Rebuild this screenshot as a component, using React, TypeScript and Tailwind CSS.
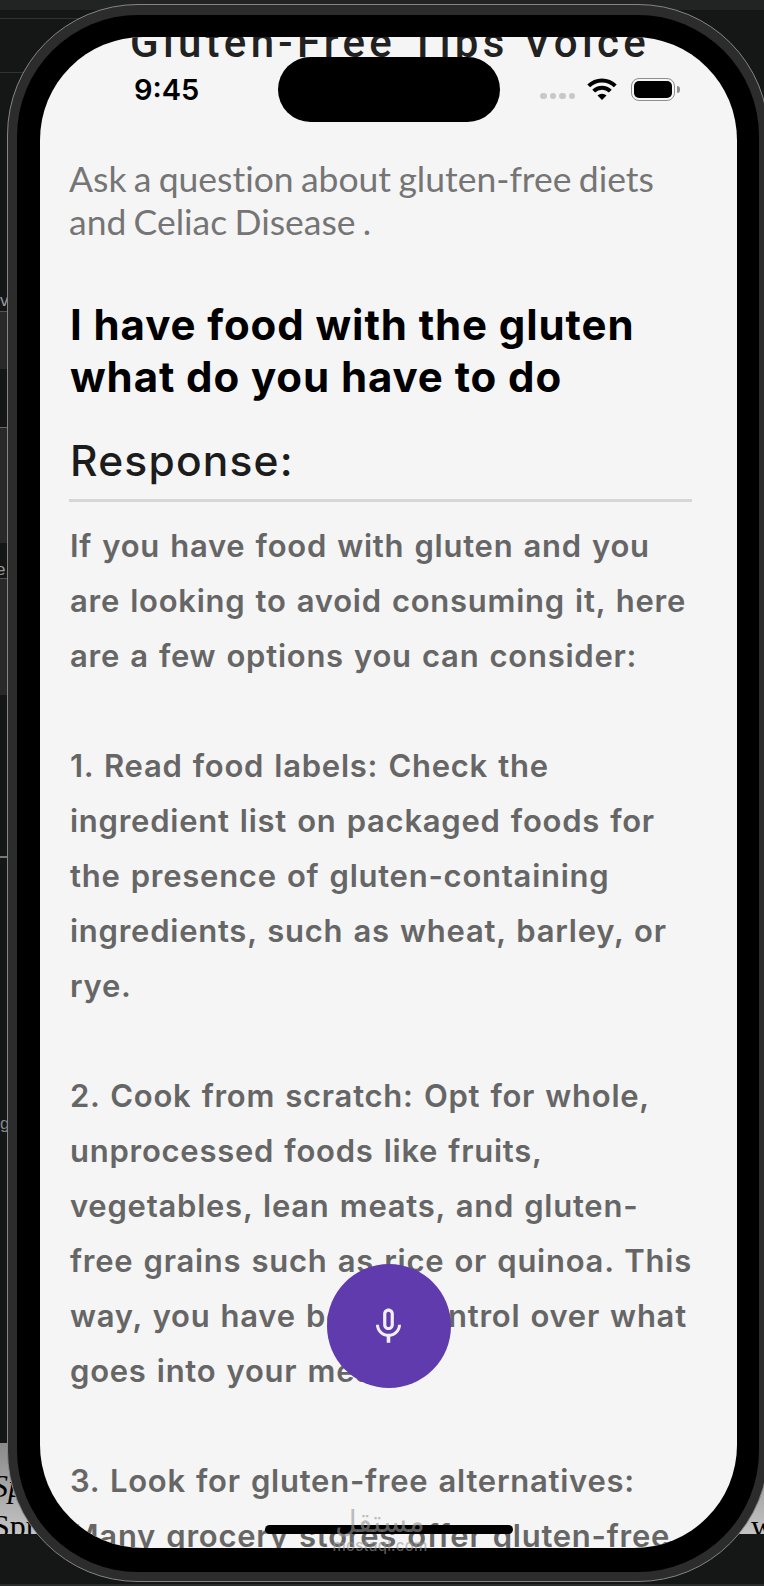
import { MdMicNone } from "react-icons/md";

// ── Content ────────────────────────────────────────────────────────────────────

const RESPONSE_LINES = [
  "If you have food with gluten and you",
  "are looking to avoid consuming it, here",
  "are a few options you can consider:",
  "",
  "1. Read food labels: Check the",
  "ingredient list on packaged foods for",
  "the presence of gluten-containing",
  "ingredients, such as wheat, barley, or",
  "rye.",
  "",
  "2. Cook from scratch: Opt for whole,",
  "unprocessed foods like fruits,",
  "vegetables, lean meats, and gluten-",
  "free grains such as rice or quinoa. This",
  "way, you have better control over what",
  "goes into your meals.",
  "",
  "3. Look for gluten-free alternatives:",
  "Many grocery stores offer gluten-free",
];

// ── Desktop behind the phone ───────────────────────────────────────────────────

/** Slices of the windows behind the phone; only the outer edges stay visible. */
function DesktopBackdrop() {
  return (
    <div className="flex h-full flex-col bg-[#141716]">
      <div className="h-2.5 shrink-0 bg-[#222423]" />
      <div className="mt-2 h-px w-20 shrink-0 bg-[#303332]" />
      <div className="mt-[53px] h-px w-6 shrink-0 bg-[#303332]" />
      <div className="flex h-[238px] shrink-0 items-end font-['Liberation_Sans',sans-serif] text-[17px] leading-5 text-[#999]">
        v
      </div>
      <div className="h-[58px] w-2 shrink-0 border-t border-[#555] bg-[#292929]" />
      <div className="mt-[58px] h-[116px] w-2 shrink-0 border-t border-[#666] bg-[#292929]" />
      <div className="flex h-[36px] w-2 shrink-0 items-end border-b border-[#555] font-['Liberation_Sans',sans-serif] text-[17px] leading-4 text-[#999]">
        <span className="-ml-1">e.</span>
      </div>
      <div className="h-[116px] w-2 shrink-0 bg-[#292929]" />
      <div className="mt-[161px] h-0.5 w-2 shrink-0 bg-[#777]" />
      <div className="mt-[256px] flex h-5 shrink-0 items-center font-['Liberation_Sans',sans-serif] text-[17px] text-[#888]">
        g
      </div>
      <div className="mt-auto h-[91px] shrink-0 overflow-hidden bg-linear-to-b from-[#8a8a8a] to-[#c4c4c4] pt-[23px] font-['Liberation_Serif',serif] text-[32px] leading-[40px] text-black">
        <p className="-ml-2 italic">Sp</p>
        <p className="-ml-2 flex justify-between">
          <span>Spring</span>
          <span className="-mr-2.5">w</span>
        </p>
      </div>
      <div className="mt-[50px] h-0.5 shrink-0 bg-[#292b2a]" />
    </div>
  );
}

// ── Status bar ─────────────────────────────────────────────────────────────────

function WifiIcon() {
  return (
    <svg className="h-[22px] w-[30px]" viewBox="0 0 30 22" fill="none" stroke="#000" strokeWidth="4">
      <path d="M1.7 7.9a18.8 18.8 0 0 1 26.6 0" />
      <path d="M6.7 13.1a11.7 11.7 0 0 1 16.6 0" />
      <path d="M15 22l-4.5-4.5a6.4 6.4 0 0 1 9 0z" fill="#000" stroke="none" />
    </svg>
  );
}

function BatteryIcon() {
  return (
    <div className="flex items-center gap-[1.5px]">
      <div className="h-[23px] w-[44px] rounded-[8px] border-[1.5px] border-[#8e8e8e] p-[2px]">
        <div className="h-full w-full rounded-[5px] bg-black" />
      </div>
      <div className="h-[7px] w-[3px] rounded-r-full bg-[#8e8e8e]" />
    </div>
  );
}

function StatusBar() {
  return (
    <div className="absolute inset-x-0 top-5 flex h-[65px] items-center pl-[94px]">
      <span className="w-36 font-['Inter',sans-serif] text-[29px] font-semibold leading-9 text-black">
        9:45
      </span>
      {/* Dynamic Island */}
      <div className="h-full w-[222px] rounded-full bg-black" />
      <div className="ml-10 flex items-center pb-px">
        <div className="flex gap-[3px] pt-[14px]">
          {[0, 1, 2, 3].map((i) => (
            <span key={i} className="size-[6.5px] rounded-full bg-[#c8c8c8]" />
          ))}
        </div>
        <div className="ml-3 mr-[14px]">
          <WifiIcon />
        </div>
        <BatteryIcon />
      </div>
    </div>
  );
}

// ── Screen ─────────────────────────────────────────────────────────────────────

function Watermark() {
  return (
    <div className="absolute inset-x-0 bottom-8 flex flex-col items-center pr-1 text-[#959595]/60">
      <p className="font-['DejaVu_Sans',sans-serif] text-[30px] leading-8">مستقل</p>
      <p className="font-['Inter',sans-serif] text-[15px] font-medium leading-4 tracking-[0.2px]">mostaql.com</p>
    </div>
  );
}

function VoiceScreen() {
  return (
    <div className="relative h-[1511px] w-[697px] overflow-hidden rounded-[103px] bg-[#f5f5f5] font-['Inter',sans-serif]">
      <h1 className="-mt-[19px] h-[47px] whitespace-nowrap pl-[90px] font-['Roboto',sans-serif] text-[42px] font-medium leading-[50px] tracking-[4.3px] text-[#212121]">
        Gluten-Free Tips Voice
      </h1>

      <main className="whitespace-nowrap px-[29px] pt-[92px]">
        <p className="font-['Lato',sans-serif] text-[35.5px] leading-[43px] text-[#757575] [font-variant-ligatures:none] [word-spacing:-1.8px]">
          Ask a question about gluten-free diets
          <br />
          and Celiac Disease .
        </p>
        <h2 className="mt-14 pl-px text-[42px] font-bold leading-[52px] tracking-[0.9px] text-black">
          I have food with the gluten
          <br />
          what do you have to do
        </h2>
        <h3 className="mt-8 pl-px text-[42.5px] font-[450] leading-[52px] tracking-[1.2px] text-[#1c1c1c]">
          Response:
        </h3>
        <div className="mt-3 h-[2.5px] w-[623px] bg-[#d6d6d6]" />
        <div className="mt-4 pl-px text-[31px] font-[580] leading-[55px] tracking-[0.75px] text-[#666] [word-spacing:1.6px]">
          {RESPONSE_LINES.map((line, i) => (
            <p key={i} className="h-[55px]">
              {line}
            </p>
          ))}
        </div>
      </main>

      <StatusBar />

      {/* Floating mic button */}
      <div className="absolute inset-x-0 bottom-40 flex justify-center">
        <button className="flex size-[124px] items-center justify-center rounded-full bg-[#5f3bae]">
          <MdMicNone className="size-[43px] text-[#f0f0f0]" />
        </button>
      </div>

      {/* Home indicator */}
      <div className="absolute inset-x-0 bottom-3.5 flex justify-center">
        <div className="h-[9px] w-[248px] rounded-full bg-black" />
      </div>
    </div>
  );
}

export default function App() {
  return (
    <div className="relative h-[1586px] w-[764px] overflow-hidden">
      <DesktopBackdrop />
      {/* Phone body: thin highlight, metal band, black bezel */}
      <div className="absolute left-[7px] top-1 h-[1578px] w-[762px] rounded-[131px] border border-[#858585] bg-[#2c2c2c] p-[9px] pt-[10px]">
        <div className="h-[1557px] w-[742px] rounded-[121px] bg-black pl-[23px] pt-[22px]">
          <VoiceScreen />
        </div>
      </div>
      <Watermark />
    </div>
  );
}
